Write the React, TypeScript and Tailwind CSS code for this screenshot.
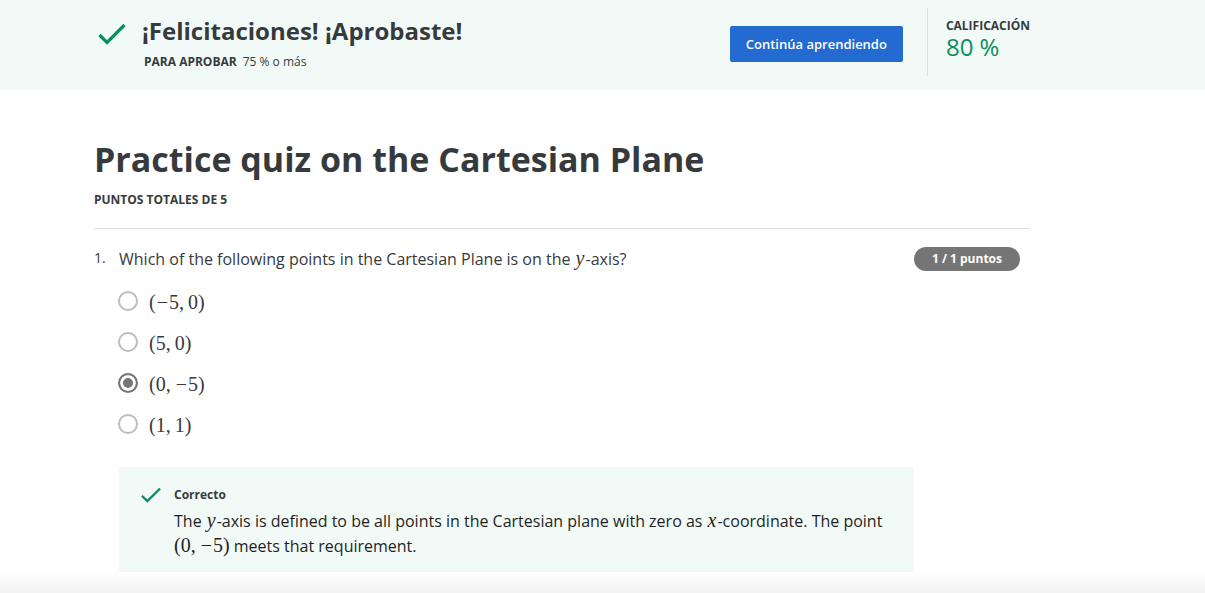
import type { ReactNode } from "react";

function Check({ className }: { className: string }) {
  return (
    <svg viewBox="0 0 28 22" fill="none" stroke="#0a8f5c" strokeWidth="3.2" className={className} aria-hidden="true">
      <path d="M1.5 12 L9 19.5 L26.5 2" />
    </svg>
  );
}

function MathVar({ children }: { children: ReactNode }) {
  return <i className="mx-px font-['Liberation_Serif',serif] text-xl leading-none">{children}</i>;
}

function Coord({ value }: { value: number }) {
  return (
    <>
      {value < 0 && <span className="mx-px">−</span>}
      {Math.abs(value)}
    </>
  );
}

function Point({ x, y }: { x: number; y: number }) {
  return (
    <span className="inline-flex gap-1 font-['Liberation_Serif',serif] text-xl leading-none whitespace-nowrap">
      <span>
        (<Coord value={x} />,
      </span>
      <span>
        <Coord value={y} />)
      </span>
    </span>
  );
}

const options = [
  { x: -5, y: 0 },
  { x: 5, y: 0 },
  { x: 0, y: -5 },
  { x: 1, y: 1 },
];

export default function App() {
  return (
    <div className="flex min-h-screen flex-col bg-white font-['Open_Sans',sans-serif] text-[#373a3c]">
      <header className="flex items-start bg-[#f2faf8] pt-2 pr-[175px] pb-3.5 pl-[98px]">
        <Check className="mt-[15px] w-7 shrink-0" />
        <div className="ml-4 flex-1 pt-[5px]">
          <h1 className="text-2xl leading-9 font-bold">¡Felicitaciones! ¡Aprobaste!</h1>
          <p className="mt-[3px] ml-0.5 text-xs leading-5">
            <strong className="mr-1.5 font-bold">PARA APROBAR</strong>75 % o más
          </p>
        </div>
        <button type="button" className="mt-[18px] h-9 rounded-xs bg-[#246bd1] px-4 pt-0.5 text-[13px] font-semibold text-white">
          Continúa aprendiendo
        </button>
        <div className="ml-6 h-[68px] border-l border-[#dddddd] pt-2 pl-[18px]">
          <p className="text-xs leading-5 font-bold">CALIFICACIÓN</p>
          <p className="text-2xl leading-[22px] text-[#0a8f5c]">80 %</p>
        </div>
      </header>

      <main className="pt-[45px] pr-[175px] pl-[94px]">
        <h2 className="text-[34px] leading-12 font-bold">Practice quiz on the Cartesian Plane</h2>
        <p className="mt-[7px] text-xs leading-5 font-bold">PUNTOS TOTALES DE 5</p>
        <hr className="mt-[18px] border-[#dddddd]" />

        <section className="flex pt-[18px] pr-2.5">
          <span className="w-[25px] shrink-0 text-sm leading-[22px]">1.</span>
          <fieldset className="min-w-0 flex-1">
            <legend className="text-base leading-6">
              Which of the following points in the Cartesian Plane is on the <MathVar>y</MathVar>-axis?
            </legend>
            <div className="flex flex-col gap-[17px] pt-[18px]">
              {options.map((o, i) => (
                <label key={i} className="flex h-6 items-center gap-[11px] self-start">
                  <input
                    type="radio"
                    name="answer"
                    defaultChecked={i === 2}
                    className="-ml-px size-5 appearance-none rounded-full border-2 border-[#bdbdbd] bg-white checked:border-[#757575] checked:bg-[#757575] checked:shadow-[inset_0_0_0_3px_white]"
                  />
                  <span className="flex pt-0.5">
                    <Point x={o.x} y={o.y} />
                  </span>
                </label>
              ))}
            </div>
            <div className="mt-[31px] flex bg-[#f2faf8] pt-[18px] pr-5 pb-[13px] pl-[21px]">
              <Check className="mt-0.5 h-4 w-[22px] shrink-0" />
              <div className="ml-3">
                <h3 className="text-xs leading-5 font-bold">Correcto</h3>
                <p className="mt-1 text-base leading-[25px] text-[#1f1f1f]">
                  The <MathVar>y</MathVar>-axis is defined to be all points in the Cartesian plane with zero as{" "}
                  <MathVar>x</MathVar>-coordinate. The point <Point x={0} y={-5} /> meets that requirement.
                </p>
              </div>
            </div>
          </fieldset>
          <span className="h-6 w-[106px] shrink-0 rounded-full bg-[#757575] text-center text-xs leading-6 font-bold text-white">
            1 / 1 puntos
          </span>
        </section>
      </main>
      <div className="min-h-5 flex-1 bg-linear-to-b from-white to-[#f2f2f2]" />
    </div>
  );
}
